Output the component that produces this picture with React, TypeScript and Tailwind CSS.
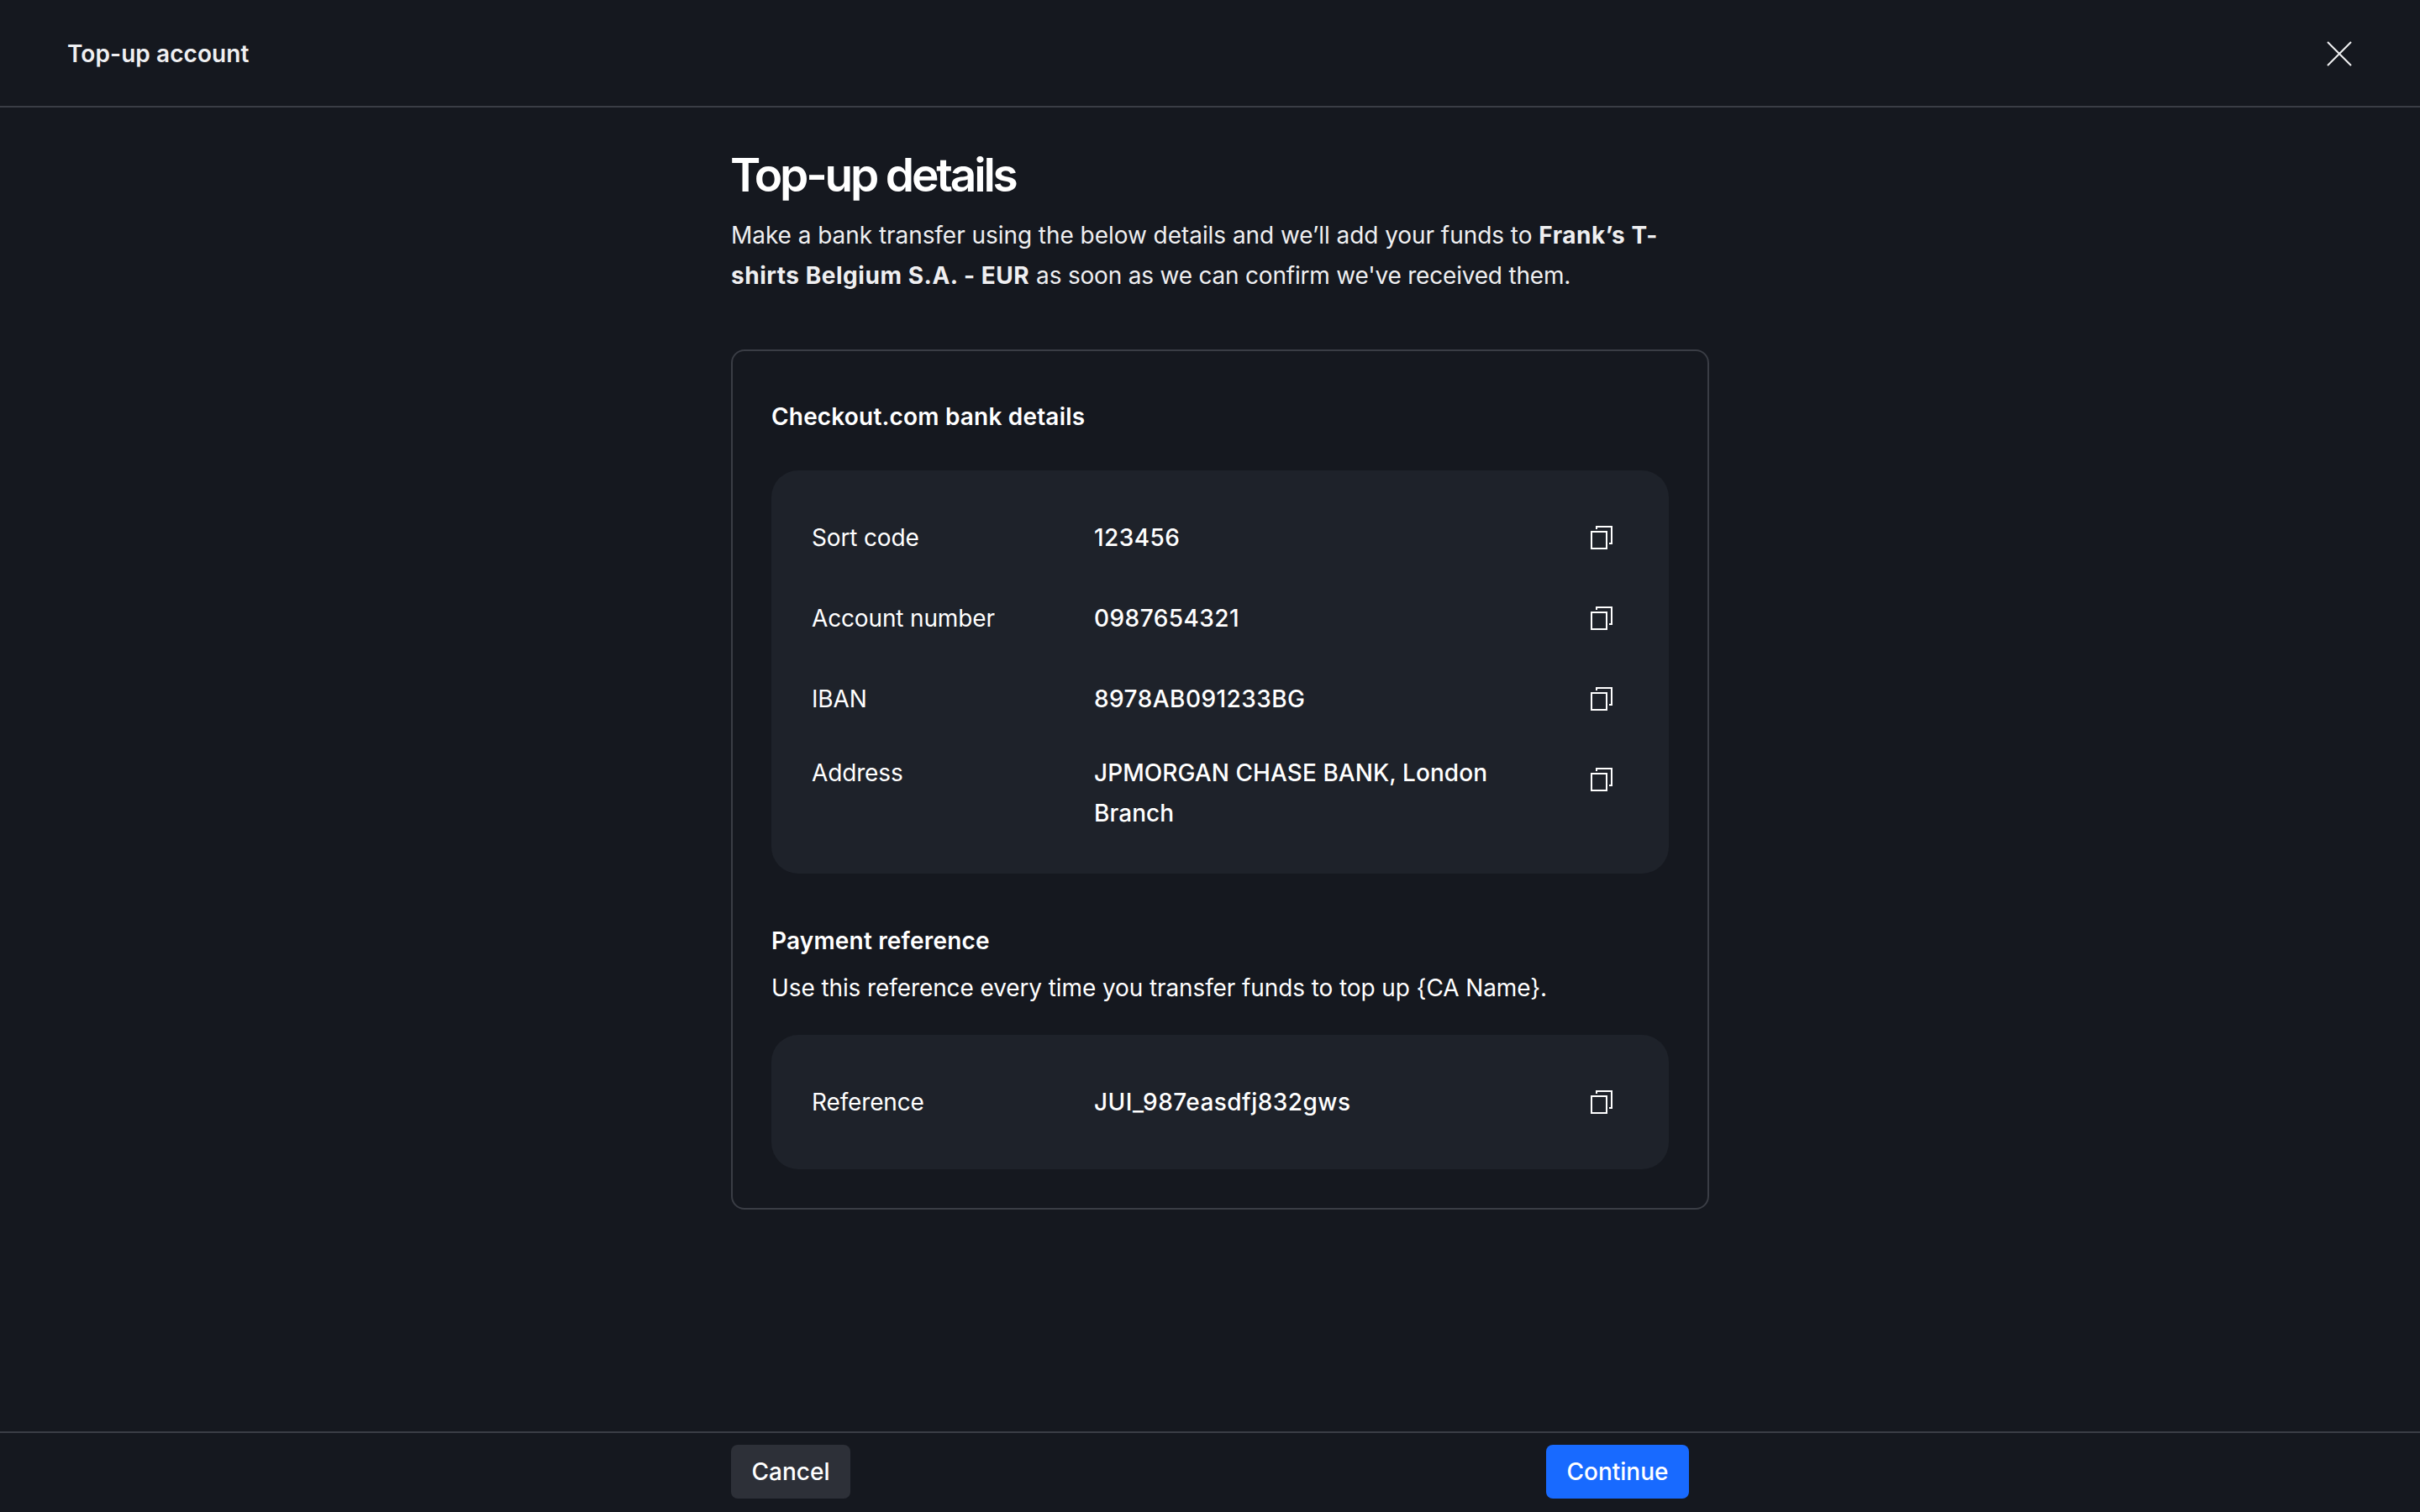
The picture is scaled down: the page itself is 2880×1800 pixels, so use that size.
const BANK_DETAILS = [
  { label: 'Sort code', value: '123456' },
  { label: 'Account number', value: '0987654321' },
  { label: 'IBAN', value: '8978AB091233BG' },
  { label: 'Address', value: 'JPMORGAN CHASE BANK, London Branch', multiline: true },
]

function CloseIcon() {
  return (
    <svg className="h-8 w-8" viewBox="0 0 32 32" fill="none" stroke="currentColor" strokeWidth={2}>
      <path d="M2 2l28 28M30 2L2 30" />
    </svg>
  )
}

function CopyIcon() {
  return (
    <svg className="h-7 w-[26px]" viewBox="0 0 26 28" fill="none" stroke="currentColor" strokeWidth={2}>
      <path d="M1 7h18v20H1z" />
      <path d="M7 4V1h18v20h-3" />
    </svg>
  )
}

type DetailRowProps = {
  label: string
  value: string
  multiline?: boolean
}

function DetailRow({ label, value, multiline }: DetailRowProps) {
  return (
    <div className={`flex ${multiline ? 'items-start tracking-[0.06px]' : 'items-center tracking-[0.45px]'}`}>
      <div className="w-[336px] shrink-0 tracking-[-0.15px]">{label}</div>
      <div className="flex-1 pr-8 font-medium">{value}</div>
      <button aria-label={`Copy ${label}`} className="flex h-16 w-16 shrink-0 items-center justify-center">
        <CopyIcon />
      </button>
    </div>
  )
}

export default function App() {
  return (
    <div className="flex h-[1800px] w-[2880px] flex-col bg-[#15181f] font-['Inter',sans-serif] text-[28px] leading-[48px] text-white">
      {/* Header */}
      <header className="flex h-32 items-center justify-between border-b-2 border-[#3a3d45] px-20 pt-[2px] text-[#efeff1]">
        <h1 className="font-semibold tracking-[0.07px]">Top-up account</h1>
        <button aria-label="Close">
          <CloseIcon />
        </button>
      </header>

      <main className="flex-1 pl-[870px] pt-[50px]">
        <h2 className="-ml-px text-[55px] font-semibold leading-[60px] tracking-[-3.2px]">Top-up details</h2>
        <p className="mt-[18px] w-[1140px] tracking-[-0.05px] text-[#efeff1]">
          Make a bank transfer using the below details and we’ll add your funds to{' '}
          <strong className="font-bold tracking-[0.53px]">Frank’s T-shirts Belgium S.A. - EUR</strong>{' '}
          <span className="tracking-[-0.2px]">as soon as we can confirm we've received them.</span>
        </p>

        <section className="mt-16 w-[1164px] rounded-2xl border-2 border-[#3a3d45] px-[46px] pb-[46px] pt-[54px]">
          <h3 className="font-semibold tracking-[0.18px]">Checkout.com bank details</h3>
          <div className="mt-10 flex flex-col gap-8 rounded-[32px] bg-[#1e222a] p-12">
            {BANK_DETAILS.map((row) => (
              <DetailRow key={row.label} {...row} />
            ))}
          </div>

          <h3 className="mt-14 font-semibold tracking-[0.18px]">Payment reference</h3>
          <p className="mt-2 tracking-[-0.1px]">
            Use this reference every time you transfer funds to top up {'{CA Name}'}.
          </p>
          <div className="mt-8 rounded-[32px] bg-[#1e222a] p-12">
            <DetailRow label="Reference" value="JUI_987easdfj832gws" />
          </div>
        </section>
      </main>

      {/* Footer actions */}
      <footer className="h-24 border-t-2 border-[#3a3d45] pl-[870px] pt-[14px]">
        <div className="flex w-[1140px] justify-between font-medium">
          <button className="h-16 w-[142px] rounded-lg bg-[#2d3038]">Cancel</button>
          <button className="h-16 w-[170px] rounded-lg bg-[#186aff]">Continue</button>
        </div>
      </footer>
    </div>
  )
}
